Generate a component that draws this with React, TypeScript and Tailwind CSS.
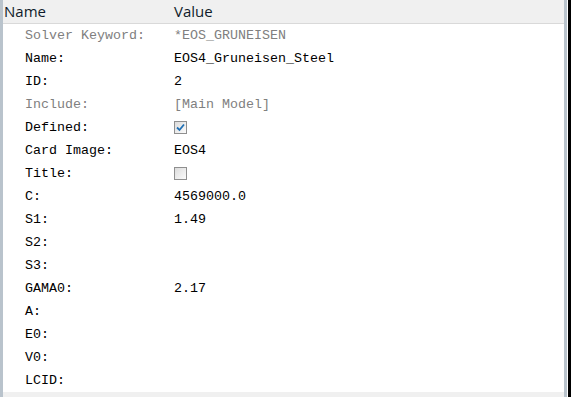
import React from 'react';

type Row = {
  label: string;
  value?: string;
  muted?: boolean;
  check?: boolean;
};

const rows: Row[] = [
  { label: 'Solver Keyword:', value: '*EOS_GRUNEISEN', muted: true },
  { label: 'Name:', value: 'EOS4_Gruneisen_Steel' },
  { label: 'ID:', value: '2' },
  { label: 'Include:', value: '[Main Model]', muted: true },
  { label: 'Defined:', check: true },
  { label: 'Card Image:', value: 'EOS4' },
  { label: 'Title:', check: false },
  { label: 'C:', value: '4569000.0' },
  { label: 'S1:', value: '1.49' },
  { label: 'S2:' },
  { label: 'S3:' },
  { label: 'GAMA0:', value: '2.17' },
  { label: 'A:' },
  { label: 'E0:' },
  { label: 'V0:' },
  { label: 'LCID:' },
];

const CheckBox: React.FC<{ checked: boolean }> = ({ checked }) => (
  <div className="w-[13px] h-[13px] border border-[#8f8f8f] bg-gradient-to-br from-[#dcdcdc] to-[#fbfbfb] flex items-center justify-center">
    {checked && (
      <svg width="9" height="9" viewBox="0 0 9 9">
        <path d="M1 4.5 L3.5 7 L8 1.5" fill="none" stroke="#1f6fb5" strokeWidth="1.8" />
      </svg>
    )}
  </div>
);

export default function App() {
  return (
    <div className="w-[571px] h-[397px] flex bg-white overflow-hidden">
      <div className="w-[3px] bg-[#b9c3cc]" />
      <div className="flex-1 flex flex-col">
        <div className="h-[24px] bg-[#f0f0f0] border-b border-[#d9d9d9] flex items-center text-[15px] text-[#0f1b2a] font-['Open_Sans',sans-serif]">
          <div className="w-[171px] pl-[1px]">Name</div>
          <div>Value</div>
        </div>
        <div className="flex-1 flex flex-col font-['Liberation_Mono',monospace] text-[13.33px]">
          {rows.map((r) => (
            <div
              key={r.label}
              className={`h-[23px] flex items-center ${r.muted ? 'text-[#808080]' : 'text-black'}`}
            >
              <div className="w-[171px] pl-[22px] whitespace-pre">{r.label}</div>
              <div className="whitespace-pre">
                {r.check !== undefined ? <CheckBox checked={r.check} /> : r.value}
              </div>
            </div>
          ))}
        </div>
        <div className="h-[5px] bg-[#f0f0f0]" />
      </div>
      <div className="w-[3px] bg-[#b9c3cc]" />
      <div className="w-[1px] bg-white" />
      <div className="w-[3px] bg-black" />
    </div>
  );
}
